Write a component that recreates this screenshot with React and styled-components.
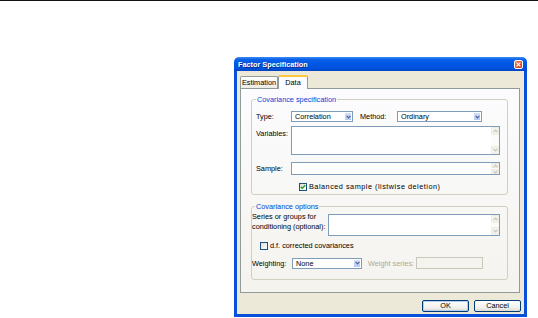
import React from 'react';
import styled, { createGlobalStyle } from 'styled-components';

const GlobalStyle = createGlobalStyle`
  html, body {
    margin: 0;
    padding: 0;
    background: #fff;
  }
  body {
    font-family: "Liberation Sans", Arial, sans-serif;
    font-size: 7.3px;
    color: #000;
  }
`;

const Page = styled.div`
  width: 538px;
  height: 318px;
  box-sizing: border-box;
  border-top: 1px solid #111;
  padding: 56px 0 0 234px;
  overflow: hidden;
`;

const Window = styled.div`
  width: 293px;
  height: 260px;
  display: flex;
  flex-direction: column;
`;

const TitleBar = styled.div`
  height: 14px;
  flex: none;
  display: flex;
  align-items: center;
  justify-content: space-between;
  padding: 0 4px 0 4px;
  border-radius: 5px 5px 0 0;
  background: linear-gradient(#3d8cf5 0%, #0a61e8 18%, #0056e6 50%, #0052de 80%, #0044c4 100%);
`;

const Title = styled.span`
  color: #fff;
  font-weight: bold;
  font-size: 7.3px;
  text-shadow: 1px 1px 0 #0a2a8a;
`;

const CloseButton = styled.span`
  width: 9px;
  height: 9px;
  box-sizing: border-box;
  border: 1px solid #fff;
  border-radius: 2px;
  background: linear-gradient(135deg, #f08a6a 0%, #e2532e 50%, #c63b17 100%);
  display: flex;
  align-items: center;
  justify-content: center;
`;

const Body = styled.div`
  flex: 1;
  display: flex;
  flex-direction: column;
  background: #ece9d8;
  border: solid #0a4fd9;
  border-width: 0 3px 3px 3px;
  padding: 4px 4px 0 3px;
`;

const TabRow = styled.div`
  height: 13px;
  display: flex;
  align-items: flex-end;
  position: relative;
  z-index: 1;
`;

const Tab = styled.div`
  width: ${p => p.w}px;
  height: ${p => (p.active ? 14 : 12)}px;
  margin-bottom: ${p => (p.active ? -1 : 0)}px;
  box-sizing: border-box;
  border: 1px solid #919b9c;
  border-bottom: none;
  border-top: ${p => (p.active ? '2px solid #ffc83c' : '1px solid #919b9c')};
  border-radius: 2px 2px 0 0;
  background: ${p => (p.active ? '#fcfcfe' : 'linear-gradient(#fff, #ecebe6)')};
  display: flex;
  align-items: center;
  justify-content: center;
  line-height: 1;
`;

const Panel = styled.div`
  height: 205px;
  box-sizing: border-box;
  border: 1px solid #919b9c;
  background: linear-gradient(#fcfcfe, #f4f3ee);
  display: flex;
  flex-direction: column;
`;

const Group = styled.fieldset`
  margin: ${p => p.mt}px 11px 0 10px;
  padding: 0 0 ${p => p.pb}px ${p => p.pl}px;
  border: 1px solid #d0d0bf;
  border-radius: 3px;
  min-width: 0;
`;

const Caption = styled.legend`
  color: #0046d5;
  padding: 0 1px;
  margin-left: ${p => p.ml || 0}px;
  line-height: 9px;
  font-size: 7.3px;
`;

const Row = styled.div`
  display: flex;
  align-items: ${p => p.align || 'center'};
  margin-top: ${p => p.mt}px;
  margin-left: ${p => p.ml || 0}px;
`;

const Label = styled.span`
  width: ${p => p.w}px;
  flex: none;
  margin-left: ${p => p.ml || 0}px;
  padding-top: ${p => p.pt || 0}px;
  line-height: ${p => p.lh || 11}px;
  color: ${p => (p.disabled ? '#aca899' : '#000')};
  white-space: nowrap;
`;

const SelectBox = styled.div`
  width: ${p => p.w}px;
  height: 11px;
  box-sizing: border-box;
  border: 1px solid #7f9db9;
  background: #fff;
  display: flex;
  align-items: stretch;
`;

const SelectText = styled.span`
  flex: 1;
  padding-left: 3px;
  line-height: 9px;
`;

const SelectArrow = styled.span`
  width: 8px;
  box-sizing: border-box;
  border: 1px solid #fff;
  border-radius: 1px;
  background: linear-gradient(#d2defc, #b6caf7);
  display: flex;
  align-items: center;
  justify-content: center;
`;

const TextBox = styled.div`
  width: ${p => p.w}px;
  height: ${p => p.h}px;
  margin-top: ${p => p.mt || 0}px;
  box-sizing: border-box;
  border: 1px solid ${p => (p.disabled ? '#c9c7ba' : '#7f9db9')};
  background: ${p => (p.disabled ? '#f4f3ee' : '#fff')};
  display: flex;
  justify-content: flex-end;
`;

const ScrollCol = styled.div`
  width: 8px;
  display: flex;
  flex-direction: column;
  justify-content: space-between;
  background: #fbfbf9;
`;

const ScrollBtn = styled.span`
  height: ${p => p.h}px;
  box-sizing: border-box;
  border: 1px solid #ecebe4;
  border-radius: 1px;
  background: #f3f2ec;
  display: flex;
  align-items: center;
  justify-content: center;
`;

const CheckBox = styled.span`
  width: 8px;
  height: 8px;
  flex: none;
  box-sizing: border-box;
  border: 1px solid #1c5180;
  background: linear-gradient(135deg, #dcdcd7, #fff);
  display: flex;
  align-items: center;
  justify-content: center;
`;

const CheckText = styled.span`
  margin-left: 2px;
  line-height: 9px;
  letter-spacing: ${p => p.ls || 0}px;
`;

const ButtonRow = styled.div`
  flex: 1;
  display: flex;
  justify-content: flex-end;
  align-items: flex-start;
  gap: 5px;
  padding-top: 7px;
  margin-right: -1px;
`;

const Button = styled.div`
  width: 47px;
  height: 12px;
  box-sizing: border-box;
  border: 1px solid #003c74;
  border-radius: 2px;
  background: linear-gradient(#fff, #f0efea 70%, #dcdad0);
  box-shadow: ${p => (p.primary ? 'inset 0 0 0 1px #b6cbf3' : 'none')};
  display: flex;
  align-items: center;
  justify-content: center;
  line-height: 1;
`;

const Chevron = ({ up, color = '#4d6185' }) => (
  <svg width="5" height="4" viewBox="0 0 5 4">
    <path
      d={up ? 'M0.6 3.2 L2.5 1.2 L4.4 3.2' : 'M0.6 0.8 L2.5 2.8 L4.4 0.8'}
      fill="none"
      stroke={color}
      strokeWidth="1.2"
    />
  </svg>
);

const Select = ({ w, value }) => (
  <SelectBox w={w}>
    <SelectText>{value}</SelectText>
    <SelectArrow>
      <Chevron />
    </SelectArrow>
  </SelectBox>
);

const ScrollArea = ({ w, h, mt, btn = 8 }) => (
  <TextBox w={w} h={h} mt={mt}>
    <ScrollCol>
      <ScrollBtn h={btn}>
        <Chevron up color="#c8c6b8" />
      </ScrollBtn>
      <ScrollBtn h={btn}>
        <Chevron color="#c8c6b8" />
      </ScrollBtn>
    </ScrollCol>
  </TextBox>
);

const Check = ({ checked }) => (
  <CheckBox>
    {checked && (
      <svg width="6" height="6" viewBox="0 0 6 6">
        <path d="M0.8 2.8 L2.3 4.3 L5.2 1.2" fill="none" stroke="#21a121" strokeWidth="1.3" />
      </svg>
    )}
  </CheckBox>
);

export default function App() {
  return (
    <Page>
      <GlobalStyle />
      <Window>
        <TitleBar>
          <Title>Factor Specification</Title>
          <CloseButton>
            <svg width="5" height="5" viewBox="0 0 5 5">
              <path d="M0.6 0.6 L4.4 4.4 M4.4 0.6 L0.6 4.4" stroke="#fff" strokeWidth="1.2" />
            </svg>
          </CloseButton>
        </TitleBar>
        <Body>
          <TabRow>
            <Tab w={38}>Estimation</Tab>
            <Tab w={30} active>Data</Tab>
          </TabRow>
          <Panel>
            <Group mt={6} pl={4} pb={3}>
              <Caption>Covariance specification</Caption>
              <Row mt={7}>
                <Label w={35}>Type:</Label>
                <Select w={62} value="Correlation" />
                <Label w={37} ml={7}>Method:</Label>
                <Select w={85} value="Ordinary" />
              </Row>
              <Row mt={4} align="flex-start">
                <Label w={35} pt={2}>Variables:</Label>
                <ScrollArea w={209} h={29} />
              </Row>
              <Row mt={7}>
                <Label w={35}>Sample:</Label>
                <ScrollArea w={209} h={13} btn={5} />
              </Row>
              <Row mt={7} ml={43}>
                <Check checked />
                <CheckText ls={0.5}>Balanced sample (listwise deletion)</CheckText>
              </Row>
            </Group>
            <Group mt={7} pl={0} pb={10}>
              <Caption ml={3}>Covariance options</Caption>
              <Row mt={1} align="flex-start">
                <Label w={76} lh={10}>
                  Series or groups for
                  <br />
                  conditioning (optional):
                </Label>
                <ScrollArea w={172} h={22} mt={2} />
              </Row>
              <Row mt={5} ml={8}>
                <Check />
                <CheckText>d.f. corrected covariances</CheckText>
              </Row>
              <Row mt={7}>
                <Label w={40}>Weighting:</Label>
                <Select w={70} value="None" />
                <Label w={48} ml={6} disabled>Weight series:</Label>
                <TextBox w={67} h={12} disabled />
              </Row>
            </Group>
          </Panel>
          <ButtonRow>
            <Button primary>OK</Button>
            <Button>Cancel</Button>
          </ButtonRow>
        </Body>
      </Window>
    </Page>
  );
}
